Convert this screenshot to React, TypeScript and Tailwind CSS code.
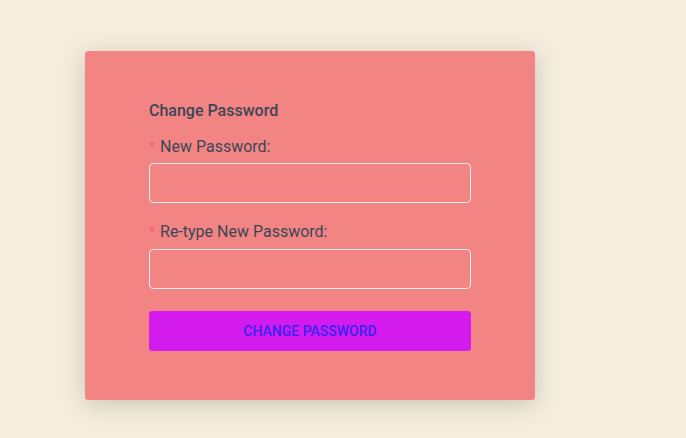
export default function App() {
  return (
    <div className="min-h-screen w-full bg-[#f5eede] pt-[51px] pl-[85px] font-['Roboto',sans-serif]">
      <div className="w-[450px] rounded-[3px] bg-[#f28584] px-[64px] pt-[49px] pb-[49px] shadow-[0_4px_24px_rgba(0,0,0,0.18)]">
        <div className="text-[16px] leading-[22px] font-medium text-[#3c4556]">Change Password</div>

        <label className="mt-[13px] flex items-center gap-[5px] text-[16px] leading-[24px] text-[#3c4556]">
          <span className="text-[#f5606e] text-[14px]">*</span>
          <span>New Password:</span>
        </label>
        <input
          type="password"
          className="mt-[4px] block h-[40px] w-full rounded-[4px] border border-[#f3eded] bg-transparent px-3 outline-none"
        />

        <label className="mt-[17px] flex items-center gap-[5px] text-[16px] leading-[24px] text-[#3c4556]">
          <span className="text-[#f5606e] text-[14px]">*</span>
          <span>Re-type New Password:</span>
        </label>
        <input
          type="password"
          className="mt-[5px] block h-[40px] w-full rounded-[4px] border border-[#f3eded] bg-transparent px-3 outline-none"
        />

        <button className="mt-[22px] block h-[40px] w-full rounded-[3px] bg-[#d41bee] text-[14px] font-medium uppercase text-[#3a22f0]">
          Change Password
        </button>
      </div>
    </div>
  );
}
